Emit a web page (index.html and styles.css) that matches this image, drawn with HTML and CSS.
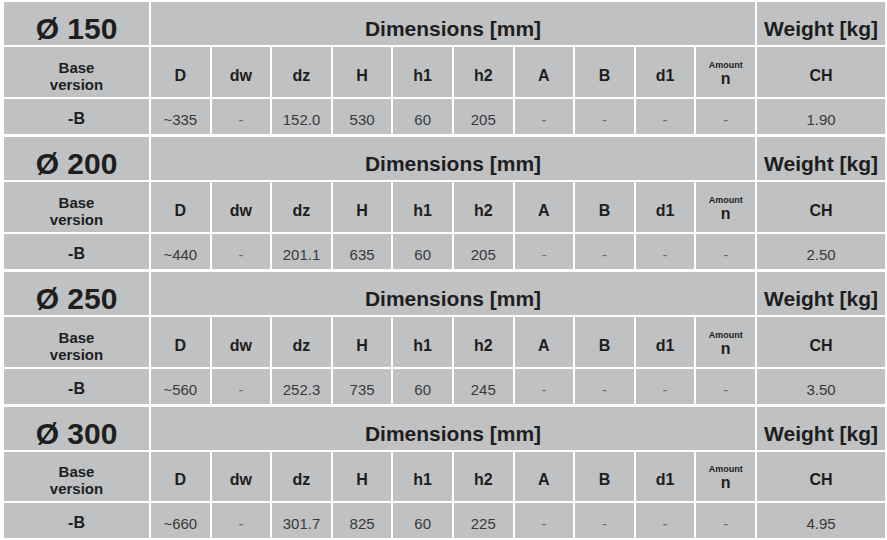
FILE: index.html
```html
<!DOCTYPE html>
<html>
<head>
<meta charset="utf-8">
<link rel="stylesheet" href="styles.css">
</head>
<body>
<div class="page">
  <div class="block">
    <div class="cell title">Ø 150</div>
    <div class="cell dims">Dimensions [mm]</div>
    <div class="cell weight">Weight [kg]</div>
    <div class="cell hd base"><span>Base</span><span>version</span></div>
    <div class="cell hd">D</div><div class="cell hd">dw</div><div class="cell hd">dz</div><div class="cell hd">H</div><div class="cell hd">h1</div><div class="cell hd">h2</div><div class="cell hd">A</div><div class="cell hd">B</div><div class="cell hd">d1</div>
    <div class="cell hd amount"><span class="small">Amount</span><span class="n">n</span></div>
    <div class="cell hd">CH</div>
    <div class="cell dt bold">-B</div>
    <div class="cell dt">~335</div><div class="cell dt dash">-</div><div class="cell dt">152.0</div><div class="cell dt">530</div><div class="cell dt">60</div><div class="cell dt">205</div><div class="cell dt dash">-</div><div class="cell dt dash">-</div><div class="cell dt dash">-</div><div class="cell dt dash">-</div><div class="cell dt">1.90</div>
  </div>
  <div class="block">
    <div class="cell title">Ø 200</div>
    <div class="cell dims">Dimensions [mm]</div>
    <div class="cell weight">Weight [kg]</div>
    <div class="cell hd base"><span>Base</span><span>version</span></div>
    <div class="cell hd">D</div><div class="cell hd">dw</div><div class="cell hd">dz</div><div class="cell hd">H</div><div class="cell hd">h1</div><div class="cell hd">h2</div><div class="cell hd">A</div><div class="cell hd">B</div><div class="cell hd">d1</div>
    <div class="cell hd amount"><span class="small">Amount</span><span class="n">n</span></div>
    <div class="cell hd">CH</div>
    <div class="cell dt bold">-B</div>
    <div class="cell dt">~440</div><div class="cell dt dash">-</div><div class="cell dt">201.1</div><div class="cell dt">635</div><div class="cell dt">60</div><div class="cell dt">205</div><div class="cell dt dash">-</div><div class="cell dt dash">-</div><div class="cell dt dash">-</div><div class="cell dt dash">-</div><div class="cell dt">2.50</div>
  </div>
  <div class="block">
    <div class="cell title">Ø 250</div>
    <div class="cell dims">Dimensions [mm]</div>
    <div class="cell weight">Weight [kg]</div>
    <div class="cell hd base"><span>Base</span><span>version</span></div>
    <div class="cell hd">D</div><div class="cell hd">dw</div><div class="cell hd">dz</div><div class="cell hd">H</div><div class="cell hd">h1</div><div class="cell hd">h2</div><div class="cell hd">A</div><div class="cell hd">B</div><div class="cell hd">d1</div>
    <div class="cell hd amount"><span class="small">Amount</span><span class="n">n</span></div>
    <div class="cell hd">CH</div>
    <div class="cell dt bold">-B</div>
    <div class="cell dt">~560</div><div class="cell dt dash">-</div><div class="cell dt">252.3</div><div class="cell dt">735</div><div class="cell dt">60</div><div class="cell dt">245</div><div class="cell dt dash">-</div><div class="cell dt dash">-</div><div class="cell dt dash">-</div><div class="cell dt dash">-</div><div class="cell dt">3.50</div>
  </div>
  <div class="block">
    <div class="cell title">Ø 300</div>
    <div class="cell dims">Dimensions [mm]</div>
    <div class="cell weight">Weight [kg]</div>
    <div class="cell hd base"><span>Base</span><span>version</span></div>
    <div class="cell hd">D</div><div class="cell hd">dw</div><div class="cell hd">dz</div><div class="cell hd">H</div><div class="cell hd">h1</div><div class="cell hd">h2</div><div class="cell hd">A</div><div class="cell hd">B</div><div class="cell hd">d1</div>
    <div class="cell hd amount"><span class="small">Amount</span><span class="n">n</span></div>
    <div class="cell hd">CH</div>
    <div class="cell dt bold">-B</div>
    <div class="cell dt">~660</div><div class="cell dt dash">-</div><div class="cell dt">301.7</div><div class="cell dt">825</div><div class="cell dt">60</div><div class="cell dt">225</div><div class="cell dt dash">-</div><div class="cell dt dash">-</div><div class="cell dt dash">-</div><div class="cell dt dash">-</div><div class="cell dt">4.95</div>
  </div>
</div>
</body>
</html>
```
FILE: styles.css
```css
html, body {
  margin: 0;
  padding: 0;
  background: #ffffff;
}
body {
  font-family: "Liberation Sans", Arial, sans-serif;
  color: #1e1e1e;
}
.page {
  width: 881px;
  padding: 2px 2px 0 4px;
  display: flex;
  flex-direction: column;
  gap: 3px;
}
.block {
  display: grid;
  grid-template-columns: 145px repeat(10, 1fr) 128px;
  grid-template-rows: 43px 50px 35px;
  column-gap: 2px;
  row-gap: 2px;
}
.block:last-child {
  grid-template-rows: 43px 49px 35px;
}
.cell {
  background: #c0c1c3;
  display: flex;
  align-items: center;
  justify-content: center;
  text-align: center;
  box-sizing: border-box;
}
.title {
  font-size: 30px;
  font-weight: bold;
  line-height: 1;
  padding-top: 11px;
}
.dims {
  grid-column: 2 / 12;
  font-size: 21px;
  font-weight: bold;
  line-height: 1;
  padding-top: 9px;
}
.weight {
  font-size: 21px;
  font-weight: bold;
  line-height: 1;
  padding-top: 9px;
}
.hd {
  font-size: 16px;
  font-weight: bold;
  line-height: 1;
  padding-top: 7px;
}
.base {
  flex-direction: column;
  font-size: 15px;
  padding-top: 7px;
}
.base span {
  line-height: normal;
}
.amount {
  flex-direction: column;
  padding-top: 3px;
}
.amount .small {
  font-size: 9px;
  line-height: normal;
}
.amount .n {
  line-height: normal;
}
.dt {
  font-size: 15px;
  line-height: 1;
  color: #3a3a3a;
  padding-top: 5px;
}
.dt.bold {
  font-size: 16px;
  font-weight: bold;
  color: #1e1e1e;
}
.dt.dash {
  color: #6a6a6a;
}
```
